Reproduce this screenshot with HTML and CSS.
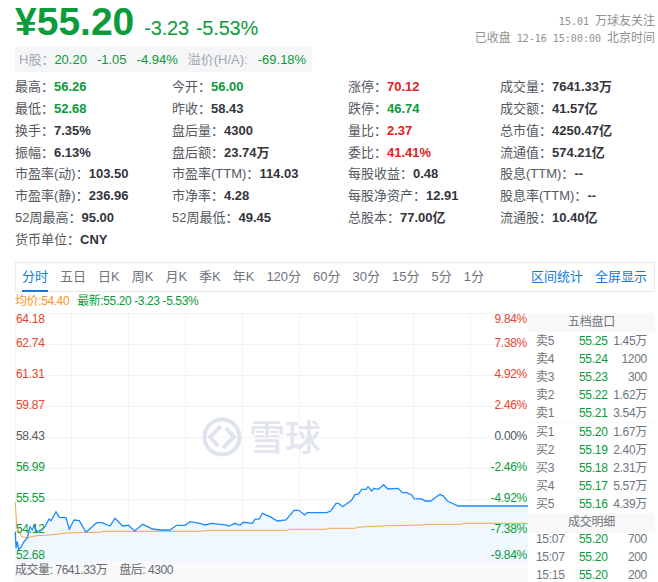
FILE: index.html
```html
<!DOCTYPE html>
<html lang="zh">
<head>
    <meta charset="UTF-8">
    <title>行情</title>
    <link rel="stylesheet" href="styles.css">
</head>
<body>
    <!-- Price header -->
    <div class="quote-head">
        <div class="price-main">
            <span class="price">¥55.20</span>
            <span class="change">-3.23</span>
            <span class="change">-5.53%</span>
        </div>
        <div class="meta">
            <div><span class="mono">15.01 </span>万球友关注</div>
            <div>已收盘<span class="mono"> 12-16 15:00:00 </span>北京时间</div>
        </div>
    </div>

    <div class="hshare">
        <span>H股：<em>20.20</em></span>
        <em>-1.05</em>
        <em>-4.94%</em>
        <span>溢价(H/A):</span>
        <em>-69.18%</em>
    </div>

    <!-- Stats table -->
    <div class="stats">
        <div>最高：<b class="green">56.26</b></div>
        <div>今开：<b class="green">56.00</b></div>
        <div>涨停：<b class="red">70.12</b></div>
        <div>成交量：<b>7641.33万</b></div>
        <div>最低：<b class="green">52.68</b></div>
        <div>昨收：<b>58.43</b></div>
        <div>跌停：<b class="green">46.74</b></div>
        <div>成交额：<b>41.57亿</b></div>
        <div>换手：<b>7.35%</b></div>
        <div>盘后量：<b>4300</b></div>
        <div>量比：<b class="red">2.37</b></div>
        <div>总市值：<b>4250.47亿</b></div>
        <div>振幅：<b>6.13%</b></div>
        <div>盘后额：<b>23.74万</b></div>
        <div>委比：<b class="red">41.41%</b></div>
        <div>流通值：<b>574.21亿</b></div>
        <div>市盈率(动)：<b>103.50</b></div>
        <div>市盈率(TTM)：<b>114.03</b></div>
        <div>每股收益：<b>0.48</b></div>
        <div>股息(TTM)：<b>--</b></div>
        <div>市盈率(静)：<b>236.96</b></div>
        <div>市净率：<b>4.28</b></div>
        <div>每股净资产：<b>12.91</b></div>
        <div>股息率(TTM)：<b>--</b></div>
        <div>52周最高：<b>95.00</b></div>
        <div>52周最低：<b>49.45</b></div>
        <div>总股本：<b>77.00亿</b></div>
        <div>流通股：<b>10.40亿</b></div>
        <div>货币单位：<b>CNY</b></div>
    </div>

    <!-- Period tabs -->
    <div class="tabs">
        <span class="tab active">分时</span>
        <span class="tab">五日</span>
        <span class="tab">日K</span>
        <span class="tab">周K</span>
        <span class="tab">月K</span>
        <span class="tab">季K</span>
        <span class="tab">年K</span>
        <span class="tab">120分</span>
        <span class="tab">60分</span>
        <span class="tab">30分</span>
        <span class="tab">15分</span>
        <span class="tab">5分</span>
        <span class="tab">1分</span>
        <span class="tab link first-link">区间统计</span>
        <span class="tab link">全屏显示</span>
    </div>

    <div class="legend">
        <span class="orange">均价:54.40</span>
        <span class="green">最新:55.20 -3.23 -5.53%</span>
    </div>

    <div class="chart-wrap">
        <div class="chart-col">
            <!-- viewBox uses page coordinates, chart origin is (15,313) -->
            <svg class="chart" width="513" height="249" viewBox="15 313 513 249">
                <g class="grid">
                    <path d="M15 313.5H528M15 344.5H528M15 375.5H528M15 406.5H528M15 437.5H528M15 468.5H528M15 499.5H528M15 530.5H528"/>
                    <path d="M15.5 313V562M71.5 313V562M128.5 313V562M185.5 313V562M242.5 313V562M299.5 313V562M356.5 313V562M413.5 313V562M470.5 313V562"/>
                </g>

                <!-- watermark -->
                <g class="mark-logo">
                    <circle cx="222" cy="437" r="17.5"/>
                    <path d="M221 426L210 437L218 446"/>
                    <path d="M223 448L234 437L226 428"/>
                </g>
                <text class="mark-text" x="249" y="451">雪球</text>

                <polygon class="area" points="15.3,562 15.3,531.7 16,548 17.3,541.7 18.7,550 21.3,546.7 24,541.7 27.3,538 30,526.7 32.3,530 34.3,525 36.7,531.7 41.7,530 45,526.7 49,519 51,520.7 56,511.7 59.3,517.3 66,517.7 69.3,529.3 74,520 79.3,520.7 86,532.3 96.7,522.7 101.7,522.7 110,526 115,518.3 122.7,526 128.3,525.3 134.7,531 142.7,524.3 152.7,529 160,530 170,530 176.7,525.3 185,525.3 190,521.7 200,523.3 205,525 211.7,523.3 226.7,525 228.3,526.3 235,523.3 240,525.3 243.3,522.3 252.3,523.3 255,519.3 259.3,519 262.3,513.3 270,516.7 277.3,521 286,520 294,510.3 298.7,510.3 304.7,515 307.3,512.7 326.7,512.7 330.7,511 336,503.3 338.3,503.3 342.7,506.7 351.7,500 355,494.3 358.3,494.3 361.7,489.3 366,489.3 368,486.7 371.7,491 374,488.3 378.3,489.3 383.7,484.7 387.7,489 398.3,488.3 402.3,492.7 406.7,492.7 411.7,495 414,498.7 421.7,499 425,501 430.7,501 440,494.3 443.3,496 447.3,501 458.3,506 528,506 528,562"/>
                <polyline class="avg" points="15.3,502.3 16.7,526.7 21.7,536.7 26.7,537.7 36.7,535.7 50,535 66.7,533 83.3,532.3 100,532.3 103,531.3 200,531.3 210,530.3 286.7,530.3 290,529.3 326.7,529.3 328,528.3 355,528.3 356.7,527.3 366.7,526.7 390,525.7 423,525 425,524.3 461.7,524.3 463,523.3 528,523.3"/>
                <polyline class="line" points="15.3,531.7 16,548 17.3,541.7 18.7,550 21.3,546.7 24,541.7 27.3,538 30,526.7 32.3,530 34.3,525 36.7,531.7 41.7,530 45,526.7 49,519 51,520.7 56,511.7 59.3,517.3 66,517.7 69.3,529.3 74,520 79.3,520.7 86,532.3 96.7,522.7 101.7,522.7 110,526 115,518.3 122.7,526 128.3,525.3 134.7,531 142.7,524.3 152.7,529 160,530 170,530 176.7,525.3 185,525.3 190,521.7 200,523.3 205,525 211.7,523.3 226.7,525 228.3,526.3 235,523.3 240,525.3 243.3,522.3 252.3,523.3 255,519.3 259.3,519 262.3,513.3 270,516.7 277.3,521 286,520 294,510.3 298.7,510.3 304.7,515 307.3,512.7 326.7,512.7 330.7,511 336,503.3 338.3,503.3 342.7,506.7 351.7,500 355,494.3 358.3,494.3 361.7,489.3 366,489.3 368,486.7 371.7,491 374,488.3 378.3,489.3 383.7,484.7 387.7,489 398.3,488.3 402.3,492.7 406.7,492.7 411.7,495 414,498.7 421.7,499 425,501 430.7,501 440,494.3 443.3,496 447.3,501 458.3,506 528,506"/>

                <g class="axis">
                    <text class="t-red" x="16" y="323">64.18</text>
                    <text class="t-red" x="16" y="347">62.74</text>
                    <text class="t-red" x="16" y="378">61.31</text>
                    <text class="t-red" x="16" y="409">59.87</text>
                    <text class="t-grey" x="16" y="440">58.43</text>
                    <text class="t-green" x="16" y="471">56.99</text>
                    <text class="t-green" x="16" y="502">55.55</text>
                    <text class="t-green" x="16" y="533">54.12</text>
                    <text class="t-green" x="16" y="559">52.68</text>
                </g>
                <g class="axis axis-right">
                    <text class="t-red" x="527" y="323">9.84%</text>
                    <text class="t-red" x="527" y="347">7.38%</text>
                    <text class="t-red" x="527" y="378">4.92%</text>
                    <text class="t-red" x="527" y="409">2.46%</text>
                    <text class="t-grey" x="527" y="440">0.00%</text>
                    <text class="t-green" x="527" y="471">-2.46%</text>
                    <text class="t-green" x="527" y="502">-4.92%</text>
                    <text class="t-green" x="527" y="533">-7.38%</text>
                    <text class="t-green" x="527" y="559">-9.84%</text>
                </g>
            </svg>
            <div class="volume">
                <span>成交量: 7641.33万</span>
                <span>盘后: 4300</span>
            </div>
        </div>

        <!-- Order book -->
        <div class="book">
            <div class="book-title first">五档盘口</div>
            <div class="book-group sell">
                <div class="book-row"><span>卖5</span><em>55.25</em><span>1.45万</span></div>
                <div class="book-row"><span>卖4</span><em>55.24</em><span>1200</span></div>
                <div class="book-row"><span>卖3</span><em>55.23</em><span>300</span></div>
                <div class="book-row"><span>卖2</span><em>55.22</em><span>1.62万</span></div>
                <div class="book-row"><span>卖1</span><em>55.21</em><span>3.54万</span></div>
            </div>
            <div class="book-group">
                <div class="book-row"><span>买1</span><em>55.20</em><span>1.67万</span></div>
                <div class="book-row"><span>买2</span><em>55.19</em><span>2.40万</span></div>
                <div class="book-row"><span>买3</span><em>55.18</em><span>2.31万</span></div>
                <div class="book-row"><span>买4</span><em>55.17</em><span>5.57万</span></div>
                <div class="book-row"><span>买5</span><em>55.16</em><span>4.39万</span></div>
            </div>
            <div class="book-title detail">成交明细</div>
            <div class="book-group trades">
                <div class="book-row"><span>15:07</span><em>55.20</em><span>700</span></div>
                <div class="book-row"><span>15:07</span><em>55.20</em><span>200</span></div>
                <div class="book-row"><span>15:15</span><em>55.20</em><span>200</span></div>
            </div>
        </div>
    </div>
</body>
</html>
```

FILE: styles.css
```css
html, body {
    height: 582px;
    overflow: hidden;
}
body {
    font-family: "Liberation Sans", "Noto Sans CJK SC", sans-serif;
    background-color: #ffffff;
    color: #33353c;
    margin: 0;
    padding: 0 3px 0 15px;
}
em {
    font-style: normal;
}
.green {
    color: #0a9b3a;
}
.red {
    color: #e8201c;
}
.orange {
    color: #f7941d;
}
/* Price header */
.quote-head {
    display: flex;
    justify-content: space-between;
    height: 47px;
}
.price-main {
    display: flex;
    align-items: baseline;
    color: #0a9b3a;
    height: 47px;
}
.price {
    font-size: 39px;
    font-weight: bold;
    line-height: 43px;
    margin-right: 10px;
}
.change {
    font-size: 20px;
    letter-spacing: -0.2px;
    margin-right: 7px;
}
.meta {
    font-size: 12px;
    line-height: 16px;
    color: #8f8f8f;
    text-align: right;
    padding-top: 13px;
}
.mono {
    font-family: "DejaVu Sans Mono", monospace;
    font-size: 10px;
    white-space: pre;
}
.hshare {
    display: flex;
    gap: 10px;
    width: 297px;
    height: 25px;
    line-height: 25px;
    box-sizing: border-box;
    padding-left: 4px;
    background-color: #f5f6f8;
    font-family: "Liberation Sans", "Noto Sans CJK TC", sans-serif;
    font-size: 13px;
    color: #a3a6ad;
}
.hshare em {
    color: #0a9b3a;
}
/* Stats table */
.stats {
    display: grid;
    grid-template-columns: 157px 176px 152px 1fr;
    grid-auto-rows: 21.85px;
    margin-top: 4px;
    font-family: "Liberation Sans", "Noto Sans CJK TC", sans-serif;
    font-size: 13px;
    line-height: 21.85px;
    color: #555960;
    white-space: nowrap;
}
.stats b {
    color: #33353c;
}
.stats b.green {
    color: #0a9b3a;
}
.stats b.red {
    color: #e8201c;
}
/* Tabs */
.tabs {
    display: flex;
    box-sizing: border-box;
    width: 640px;
    height: 30px;
    margin-top: 11px;
    padding: 0 7px 0 6px;
    gap: 12px;
    border: 1px solid #e8eaf0;
    font-size: 13px;
    line-height: 27px;
    color: #70747c;
}
.tab {
    white-space: nowrap;
}
.tab.active {
    color: #0f7bde;
    border-bottom: 2px solid #0f7bde;
    height: 27px;
}
.tab.link {
    color: #0f7bde;
}
.first-link {
    margin-left: auto;
}
.legend {
    display: flex;
    gap: 8px;
    height: 21px;
    font-size: 12px;
    letter-spacing: -0.4px;
    line-height: 18px;
}
/* Chart */
.chart-wrap {
    display: flex;
}
.chart-col {
    width: 513px;
}
.chart {
    display: block;
    overflow: visible;
}
.grid path {
    fill: none;
    stroke: #f2f3f6;
    stroke-width: 1;
}
.mark-logo circle, .mark-logo path {
    fill: none;
    stroke: #dfe3ec;
    stroke-width: 4;
}
.mark-text {
    font-family: "Noto Sans CJK SC", sans-serif;
    font-size: 36px;
    font-weight: 500;
    fill: #e2e5ee;
}
.area {
    fill: #eef6fe;
    opacity: 0.9;
}
.avg {
    fill: none;
    stroke: #f5a64a;
    stroke-width: 1;
}
.line {
    fill: none;
    stroke: #1a8cff;
    stroke-width: 1.3;
}
.axis text {
    font-size: 12px;
    letter-spacing: -0.3px;
}
.axis-right text {
    text-anchor: end;
}
.t-red {
    fill: #e8432e;
}
.t-green {
    fill: #0a9b3a;
}
.t-grey {
    fill: #555960;
}
.volume {
    display: flex;
    gap: 12px;
    height: 20px;
    line-height: 17px;
    background-color: #f9f9f9;
    font-size: 12px;
    letter-spacing: -0.45px;
    color: #666a70;
}
/* Order book */
.book {
    width: 127px;
    font-size: 12px;
    letter-spacing: -0.3px;
    color: #70747c;
}
.book-title {
    height: 20px;
    line-height: 19px;
    background-color: #f8f8f8;
    text-align: center;
}
.book-title.first {
    height: 19px;
}
.book-group.sell {
    border-bottom: 1px solid #f6f6f6;
}
.book-group.trades {
    margin-top: -3px;
}
.book-row {
    display: grid;
    grid-template-columns: 43px 30px 1fr;
    height: 18px;
    line-height: 18px;
    padding: 0 8px;
}
.book-row em {
    color: #0a9b3a;
}
.book-row span:last-child {
    text-align: right;
}
```
